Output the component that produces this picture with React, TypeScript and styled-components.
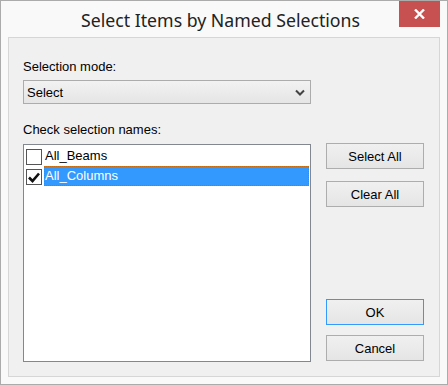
import React from "react";
import styled, { createGlobalStyle } from "styled-components";

const GlobalStyle = createGlobalStyle`
  html, body { margin: 0; padding: 0; background: #ffffff; }
  * { box-sizing: border-box; }
`;

const Window = styled.div`
  width: 448px;
  height: 385px;
  border: 1px solid #ababab;
  background: #f9f9f9;
  display: flex;
  flex-direction: column;
`;

const TitleBar = styled.div`
  height: 36px;
  display: grid;
  grid-template-columns: 1fr auto 1fr;
  padding-right: 7px;
`;

const Title = styled.div`
  grid-column: 2;
  font-family: "Segoe UI", "Noto Sans", "Open Sans", sans-serif;
  font-size: 17.7px;
  line-height: 20px;
  padding-top: 9px;
  color: #222222;
  white-space: nowrap;
`;

const CloseButton = styled.div`
  grid-column: 3;
  justify-self: end;
  width: 41px;
  height: 26px;
  background: #c75050;
  display: flex;
  align-items: center;
  justify-content: center;
`;

const Client = styled.div`
  flex: 1;
  margin: 0 7px 7px 7px;
  border: 1px solid #d6d6d6;
  background: #f0f0f0;
  padding: 21px 14px 0 14px;
  display: flex;
  flex-direction: column;
  font-family: "Liberation Sans", Arial, sans-serif;
  font-size: 13px;
  color: #000000;
`;

const FieldLabel = styled.div<{ $gap: number }>`
  height: 15px;
  line-height: 15px;
  margin-bottom: ${(p) => p.$gap}px;
`;

const Combo = styled.div`
  width: 288px;
  height: 24px;
  border: 1px solid #acacac;
  background: linear-gradient(#f2f2f2, #e5e5e5);
  display: flex;
  align-items: center;
  justify-content: space-between;
  padding: 0 5px 0 3px;
  margin-bottom: 18px;
`;

const ListArea = styled.div`
  display: flex;
  gap: 15px;
  align-items: flex-start;
`;

const ListBox = styled.div`
  width: 288px;
  height: 218px;
  border: 1px solid #828790;
  background: #ffffff;
  padding: 1px 1px 0 2px;
`;

const Item = styled.div`
  height: 20px;
  display: flex;
  align-items: flex-start;
`;

const Check = styled.div`
  width: 16px;
  height: 16px;
  margin-top: 3px;
  border: 1px solid #555555;
  background: #ffffff;
  display: flex;
  align-items: center;
  justify-content: center;
  flex: none;
`;

const ItemText = styled.div<{ $selected?: boolean }>`
  margin-left: 2px;
  flex: 1;
  height: 20px;
  line-height: 18px;
  background: ${(p) => (p.$selected ? "#3399ff" : "transparent")};
  color: ${(p) => (p.$selected ? "#ffffff" : "#000000")};
  border: 1px ${(p) => (p.$selected ? "dotted #c86a10" : "solid transparent")};
`;

const ButtonColumn = styled.div`
  margin-top: -1px;
  height: 218px;
  display: flex;
  flex-direction: column;
  justify-content: space-between;
`;

const ButtonGroup = styled.div<{ $gap: number }>`
  display: flex;
  flex-direction: column;
  gap: ${(p) => p.$gap}px;
`;

const Button = styled.div<{ $default?: boolean }>`
  width: 98px;
  height: 26px;
  border: 1px solid ${(p) => (p.$default ? "#3399ff" : "#adadad")};
  background: linear-gradient(#f0f0f0, #e5e5e5);
  display: flex;
  align-items: center;
  justify-content: center;
  line-height: 15px;
`;

export default function App() {
  return (
    <>
      <GlobalStyle />
      <Window>
        <TitleBar>
          <Title>Select Items by Named Selections</Title>
          <CloseButton>
            <svg width="11" height="10" viewBox="0 0 11 10">
              <path d="M1 0.5 L10 9.5 M10 0.5 L1 9.5" stroke="#ffffff" strokeWidth="2.4" />
            </svg>
          </CloseButton>
        </TitleBar>
        <Client>
          <FieldLabel $gap={6}>Selection mode:</FieldLabel>
          <Combo>
            <span>Select</span>
            <svg width="10" height="7" viewBox="0 0 10 7">
              <path d="M1 1.5 L5 5.5 L9 1.5" stroke="#444444" strokeWidth="2" fill="none" />
            </svg>
          </Combo>
          <FieldLabel $gap={7}>Check selection names:</FieldLabel>
          <ListArea>
            <ListBox>
              <Item>
                <Check />
                <ItemText>All_Beams</ItemText>
              </Item>
              <Item>
                <Check>
                  <svg width="12" height="11" viewBox="0 0 12 11">
                    <path d="M1 5.5 L4.5 9 L11 1.5" stroke="#111111" strokeWidth="2.6" fill="none" />
                  </svg>
                </Check>
                <ItemText $selected>All_Columns</ItemText>
              </Item>
            </ListBox>
            <ButtonColumn>
              <ButtonGroup $gap={12}>
                <Button>Select All</Button>
                <Button>Clear All</Button>
              </ButtonGroup>
              <ButtonGroup $gap={10}>
                <Button $default>OK</Button>
                <Button>Cancel</Button>
              </ButtonGroup>
            </ButtonColumn>
          </ListArea>
        </Client>
      </Window>
    </>
  );
}
